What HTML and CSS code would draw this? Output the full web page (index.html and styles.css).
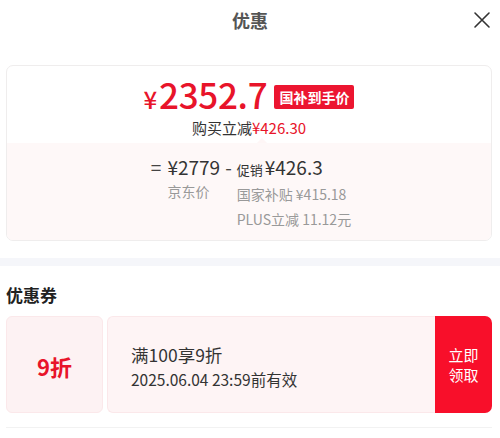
FILE: index.html
```html
<!DOCTYPE html>
<html lang="zh-CN">
<head>
<meta charset="utf-8">
<title>优惠</title>
<link rel="stylesheet" href="styles.css">
</head>
<body>
<div class="sheet">
  <header class="header">
    <h1 class="title">优惠</h1>
    <button class="close" aria-label="关闭">
      <svg width="18" height="18" viewBox="0 0 18 18"><path d="M2 2L16 16M16 2L2 16" stroke="#333" stroke-width="1.6" fill="none" stroke-linecap="round"/></svg>
    </button>
  </header>

  <section class="card">
    <div class="card-top">
      <div class="price-line">
        <span class="price"><span class="yen">¥</span>2352.7</span>
        <span class="badge">国补到手价</span>
      </div>
      <div class="saving">购买立减<span class="red">¥426.30</span></div>
    </div>
    <div class="card-bottom">
      <div class="formula">
        <span class="op">=</span>
        <div class="term">
          <span class="num">¥2779</span>
          <span class="label">京东价</span>
        </div>
        <span class="op minus">-</span>
        <div class="term">
          <span class="num"><span class="small">促销</span>¥426.3</span>
          <span class="label">国家补贴 ¥415.18</span>
          <span class="label">PLUS立减 11.12元</span>
        </div>
      </div>
    </div>
  </section>

  <div class="band"></div>

  <section class="coupons">
    <h2 class="sec-title">优惠券</h2>
    <div class="coupon">
      <div class="c-left">9折</div>
      <div class="c-mid">
        <div class="c-name">满100享9折</div>
        <div class="c-date">2025.06.04 23:59前有效</div>
      </div>
      <div class="c-btn">立即<br>领取</div>
    </div>
    <div class="next"></div>
  </section>
</div>
</body>
</html>
```

FILE: styles.css
```css
* { box-sizing: border-box; margin: 0; padding: 0; }
body {
  font-family: "Noto Sans CJK SC", "Noto Sans", sans-serif;
  background: #fff;
  color: #333;
  width: 500px;
  overflow: hidden;
}
.sheet { width: 500px; }
.header {
  position: relative;
  height: 40px;
  display: flex;
  align-items: center;
  justify-content: center;
}
.title {
  font-size: 18px;
  font-weight: 700;
  color: #555;
  line-height: 40px;
}
.close {
  position: absolute;
  right: 9px;
  top: 11px;
  width: 18px;
  height: 18px;
  border: 0;
  background: none;
  display: flex;
}
.card {
  margin: 25px 8px 0 6px;
  border: 1px solid #efeded;
  border-radius: 7px;
  overflow: hidden;
}
.card-top {
  padding: 10px 0 5px;
  display: flex;
  flex-direction: column;
  align-items: center;
}
.price-line {
  display: flex;
  align-items: center;
  height: 40px;
  gap: 7px;
  margin-bottom: 2px;
}
.price {
  color: #e8142a;
  font-size: 35px;
  font-weight: 500;
  line-height: 40px;
  letter-spacing: -0.3px;
}
.yen { font-size: 24px; margin-right: 2px; }
.badge {
  background: #ec1530;
  color: #fff;
  font-size: 14px;
  font-weight: 700;
  line-height: 24px;
  height: 24px;
  padding: 0 5px;
  border-radius: 2px;
  margin-top: 2px;
}
.saving {
  font-size: 15px;
  line-height: 20px;
  color: #333;
}
.red { color: #e8142a; }
.card-bottom {
  position: relative;
  background: #fef8f8;
  padding: 12px 0 9px;
  display: flex;
  justify-content: center;
}
.card-bottom::before {
  content: "";
  position: absolute;
  top: -5px;
  left: 250px;
  border-left: 5px solid transparent;
  border-right: 5px solid transparent;
  border-bottom: 5px solid #fef6f6;
}
.formula {
  display: flex;
  align-items: flex-start;
  margin-left: 4px;
}
.op {
  font-size: 19px;
  line-height: 24px;
  color: #444;
  margin-right: 6px;
}
.minus { margin: 0 5px 0 5px; }
.term {
  display: flex;
  flex-direction: column;
}
.num {
  font-size: 19px;
  line-height: 24px;
  color: #333;
  font-weight: 400;
}
.small {
  font-size: 13px;
  margin-right: 2px;
}
.label {
  font-size: 14px;
  line-height: 24.5px;
  color: #999;
}
.band {
  margin-top: 17px;
  height: 8px;
  background: #f5f6fa;
}
.coupons {
  padding: 17px 8px 0 6px;
}
.sec-title {
  font-size: 17px;
  font-weight: 700;
  color: #222;
  line-height: 24px;
}
.coupon {
  margin-top: 9px;
  height: 97px;
  display: flex;
  align-items: stretch;
}
.c-left {
  width: 97px;
  background: #fdf2f3;
  border: 1px solid #fbe8ea;
  border-radius: 6px;
  display: flex;
  align-items: center;
  justify-content: center;
  color: #e8142a;
  font-size: 22px;
  font-weight: 700;
  padding-top: 2px;
}
.c-mid {
  margin-left: 4px;
  flex: 1;
  background: #fef4f5;
  border: 1px solid #fbe8ea;
  border-right: 0;
  border-radius: 6px 0 0 6px;
  padding: 4px 0 0 23px;
  display: flex;
  flex-direction: column;
  justify-content: center;
}
.c-name {
  font-size: 17.5px;
  line-height: 24px;
  color: #333;
}
.c-date {
  font-size: 15.5px;
  line-height: 24px;
  color: #333;
}
.c-btn {
  width: 57px;
  background: #f80f2a;
  color: #fff;
  border-radius: 0 7px 7px 0;
  font-size: 15px;
  line-height: 20px;
  display: flex;
  align-items: center;
  justify-content: center;
  text-align: center;
}
.next {
  margin-top: 14px;
  height: 10px;
  border-top: 1px solid #f2f2f2;
}
```
